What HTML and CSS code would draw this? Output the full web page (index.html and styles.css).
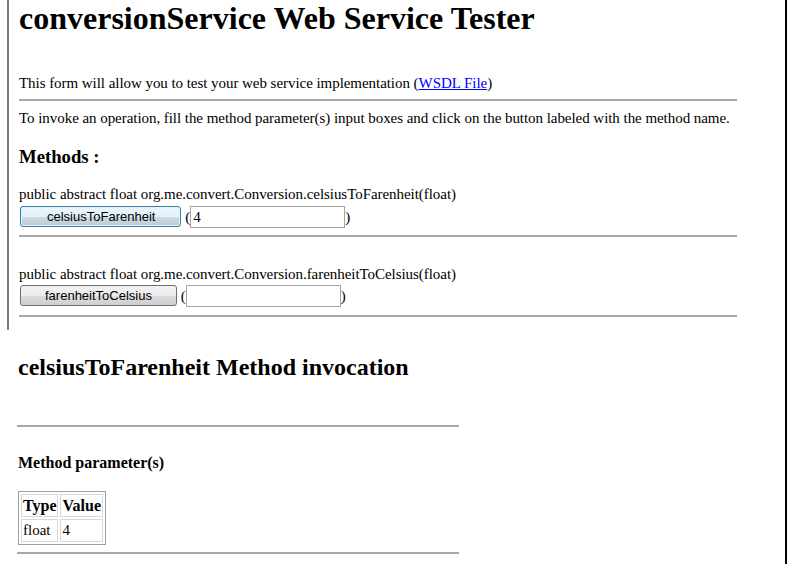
FILE: index.html
```html
<!DOCTYPE html>
<html>
<head>
<meta charset="utf-8">
<link rel="stylesheet" href="styles.css">
</head>
<body>
<div class="page">
  <div class="main">
    <div class="tester">
      <h1 class="title">conversionService Web Service Tester</h1>
      <p class="intro">This form will allow you to test your web service implementation (<a href="#">WSDL File</a>)</p>
      <hr class="rule rule-a">
      <p class="hint">To invoke an operation, fill the method parameter(s) input boxes and click on the button labeled with the method name.</p>
      <h3 class="methods">Methods :</h3>
      <p class="sig sig-1">public abstract float org.me.convert.Conversion.celsiusToFarenheit(float)</p>
      <div class="call"><button class="btn btn-focus">celsiusToFarenheit</button> (<input class="arg" type="text" value="4">)</div>
      <hr class="rule rule-b">
      <p class="sig sig-2">public abstract float org.me.convert.Conversion.farenheitToCelsius(float)</p>
      <div class="call"><button class="btn">farenheitToCelsius</button> (<input class="arg" type="text" value="">)</div>
      <hr class="rule rule-c">
    </div>
    <div class="result">
      <h2 class="inv">celsiusToFarenheit Method invocation</h2>
      <hr class="rule rule-d">
      <h4 class="params">Method parameter(s)</h4>
      <table class="ptable">
        <tr><th>Type</th><th>Value</th></tr>
        <tr><td>float</td><td>4</td></tr>
      </table>
      <hr class="rule rule-e">
    </div>
  </div>
  <div class="edge"></div>
</div>
</body>
</html>
```
FILE: styles.css
```css
html, body {
  margin: 0;
  padding: 0;
  background: #fff;
}
body {
  font-family: "Liberation Serif", "Times New Roman", serif;
  font-size: 16px;
  color: #000;
}
.page {
  display: flex;
  width: 787px;
  height: 564px;
  overflow: hidden;
}
.main {
  width: 785px;
  flex: none;
}
.edge {
  width: 2px;
  height: 564px;
  background: #000;
  flex: none;
}
.tester {
  margin-left: 7px;
  border-left: 2px solid #7a7a7a;
  padding-left: 10px;
  width: 718px;
  height: 330px;
  box-sizing: content-box;
  overflow: hidden;
}
.title {
  margin: 0;
  font-size: 32px;
  line-height: 37px;
  font-weight: bold;
}
p {
  margin: 0;
  line-height: 18px;
  font-size: 15px;
  letter-spacing: -0.05px;
  white-space: nowrap;
}
.intro { margin-top: 37px; }
a { color: #0000ff; text-decoration: underline; }
.rule {
  border: 0;
  height: 2px;
  background: #a8a8a8;
  margin: 0;
}
.rule-a { margin-top: 7px; }
.hint { margin-top: 8px; }
.methods {
  margin: 19px 0 0;
  font-size: 18.7px;
  line-height: 21px;
}
.sig-1 { margin-top: 18px; }
.call {
  margin-top: 3px;
  height: 22px;
  display: flex;
  align-items: flex-start;
  line-height: 22px;
  white-space: pre;
  font-size: 15px;
}
.btn {
  font-family: "Liberation Sans", Arial, sans-serif;
  font-size: 13px;
  height: 21px;
  padding: 0 24px;
  margin: 0 0 0 1px;
  border: 1px solid #707070;
  border-radius: 3px;
  background: linear-gradient(#f2f2f2 0%, #ebebeb 50%, #dddddd 51%, #cfcfcf 100%);
  color: #000;
  line-height: 17px;
}
.btn-focus {
  padding: 0 25px 0 26px;
  border-color: #3c7fb1;
  background: linear-gradient(#eaf6fd 0%, #e4f1f9 50%, #cfdde6 51%, #bcc9d2 100%);
  box-shadow: inset 0 0 0 1px #e6f2fa;
}
.arg {
  width: 155px;
  height: 22px;
  box-sizing: border-box;
  border: 1px solid #a5a5a5;
  padding: 0 2px;
  margin: 0;
  font-family: "Liberation Serif", "Times New Roman", serif;
  font-size: 15px;
  outline: none;
}
.rule-b { margin-top: 7px; }
.sig-2 { margin-top: 28px; }
.sig-2 + .call { margin-top: 2px; }
.rule-c { margin-top: 8px; }
.result {
  padding-left: 17px;
  width: 442px;
}
.inv {
  margin: 24px 0 0 1px;
  font-size: 24px;
  line-height: 27px;
}
.rule-d { margin-top: 44px; }
.params {
  margin: 27px 0 0 1px;
  font-size: 16px;
  line-height: 18px;
}
.ptable {
  margin-top: 19px;
  margin-left: 1px;
  border: 1px solid #a0a0a0;
  border-spacing: 2px;
  border-collapse: separate;
}
.ptable th, .ptable td {
  border: 1px solid #d8d8d8;
  padding: 1px;
  text-align: left;
  font-size: 16px;
  line-height: 19px;
}
.ptable td { font-size: 15px; }
.rule-e { margin-top: 7px; }
```
